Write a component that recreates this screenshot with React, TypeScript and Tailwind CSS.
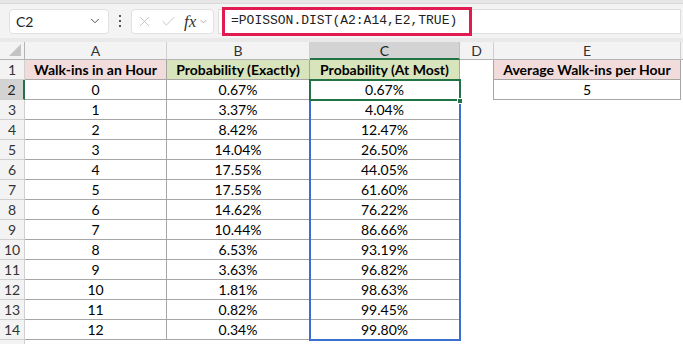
import { Check, ChevronDown, X } from "lucide-react";

const data: [string, string, string][] = [
  ["0", "0.67%", "0.67%"],
  ["1", "3.37%", "4.04%"],
  ["2", "8.42%", "12.47%"],
  ["3", "14.04%", "26.50%"],
  ["4", "17.55%", "44.05%"],
  ["5", "17.55%", "61.60%"],
  ["6", "14.62%", "76.22%"],
  ["7", "10.44%", "86.66%"],
  ["8", "6.53%", "93.19%"],
  ["9", "3.63%", "96.82%"],
  ["10", "1.81%", "98.63%"],
  ["11", "0.82%", "99.45%"],
  ["12", "0.34%", "99.80%"],
];

const cell = "flex items-center justify-center border-r border-b border-[#a6a6a6] whitespace-nowrap";
const rowHead = "flex items-center justify-center border-r border-b border-[#d0d0d0] bg-[#f3f3f3] text-[#333]";

function FormulaBar() {
  return (
    <div className="bg-[#f3f3f3]">
      <div className="h-[4px] bg-[#e6e6e6] border-b border-[#dadada]" />
      <div className="h-[34px] flex items-center pl-[9px] pr-[2px]">
        {/* name box */}
        <div className="w-[100px] h-[25px] bg-white rounded-[4px] border border-[#e1e1e1] flex items-center justify-between pl-[6px] pr-[6px] text-[14px] text-[#222]">
          <span>C2</span>
          <ChevronDown size={14} strokeWidth={1.6} className="text-[#444]" />
        </div>
        <div className="w-[22px] flex flex-col items-center gap-[3px]">
          <span className="w-[2px] h-[2px] bg-[#555]" />
          <span className="w-[2px] h-[2px] bg-[#555]" />
          <span className="w-[2px] h-[2px] bg-[#555]" />
        </div>
        {/* cancel / enter / fx */}
        <div className="w-[83px] h-[25px] bg-white rounded-[4px] border border-[#e1e1e1] flex items-center pl-[4px] gap-[7px]">
          <X size={17} strokeWidth={1.2} className="text-[#bdbdbd]" />
          <Check size={17} strokeWidth={1.2} className="text-[#bdbdbd]" />
          <span className="flex items-center">
            <span className="font-['Liberation_Serif',serif] italic text-[17px] text-[#333] leading-none">fx</span>
            <ChevronDown size={11} strokeWidth={1.5} className="text-[#888] ml-[2px]" />
          </span>
        </div>
        {/* formula input */}
        <div className="ml-[4px] flex-1 h-[25px] bg-white border border-[#dedede] flex items-center">
          <div className="ml-[3px] w-[250px] h-[29px] border-[3px] border-[#e21a52] flex items-center pl-[6px] font-['Liberation_Mono',monospace] text-[13px] text-[#222]">
            =POISSON.DIST(A2:A14,E2,TRUE)
          </div>
        </div>
      </div>
      <div className="h-[4px] bg-[#e9e9e9]" />
    </div>
  );
}

function Sheet() {
  return (
    <div className="relative grid grid-cols-[25px_142px_143px_150px_34px_187px_2px] grid-rows-[18px_repeat(15,20px)] text-[14px]">
      {/* column headers */}
      <div className="relative border-r border-b border-[#b4b4b4] bg-[#f3f3f3]">
        <svg width="12" height="12" className="absolute right-[3px] bottom-[3px]">
          <polygon points="12,0 12,12 0,12" fill="#c4c4c4" />
        </svg>
      </div>
      <div className="flex items-center justify-center bg-[#f3f3f3] border-r border-b border-[#d0d0d0] border-b-[#b4b4b4] text-[#333]">A</div>
      <div className="flex items-center justify-center bg-[#f3f3f3] border-r border-b border-[#d0d0d0] border-b-[#b4b4b4] text-[#333]">B</div>
      <div className="flex items-center justify-center bg-[#d3d3d3] border-r border-[#c0c0c0] border-b-2 border-b-[#217346] text-[#222]">C</div>
      <div className="flex items-center justify-center bg-[#f3f3f3] border-r border-b border-[#d0d0d0] border-b-[#b4b4b4] text-[#333]">D</div>
      <div className="flex items-center justify-center bg-[#f3f3f3] border-r border-b border-[#d0d0d0] border-b-[#b4b4b4] text-[#333]">E</div>
      <div className="bg-[#f3f3f3] border-b border-[#b4b4b4]" />

      {/* row 1 */}
      <div className={rowHead}>1</div>
      <div className={`${cell} bg-[#f2dcdb] font-bold`}>Walk-ins in an Hour</div>
      <div className={`${cell} bg-[#d8e4bc] font-bold`}>Probability (Exactly)</div>
      <div className={`${cell} bg-[#d8e4bc] font-bold`}>Probability (At Most)</div>
      <div className="border-r border-[#a6a6a6]" />
      <div className={`${cell} bg-[#f2dcdb] font-bold`}>Average Walk-ins per Hour</div>
      <div />

      {data.map(([a, b, c], i) => (
        <div key={i} className="contents">
          <div
            className={
              i === 0
                ? "flex items-center justify-center border-b border-[#d0d0d0] border-r-2 border-r-[#217346] bg-[#d3d3d3] text-[#222]"
                : rowHead
            }
          >
            {i + 2}
          </div>
          <div className={cell}>{a}</div>
          <div className={cell}>{b}</div>
          <div className={cell}>{c}</div>
          <div className={i === 0 ? "border-r border-[#a6a6a6]" : ""} />
          <div className={i === 0 ? cell : ""}>{i === 0 ? "5" : ""}</div>
          <div />
        </div>
      ))}

      {/* partially visible row 15 */}
      <div className="border-r border-[#d0d0d0] bg-[#f3f3f3]" />
      <div />
      <div />
      <div />
      <div />
      <div />
      <div />

      {/* reference range highlight C2:C14 */}
      <div className="absolute left-[309px] top-[37px] w-[152px] h-[262px] border-2 border-[#3b6fd0] pointer-events-none" />
      {/* active cell C2 */}
      <div className="absolute left-[309px] top-[37px] w-[152px] h-[22px] border-2 border-[#217346] pointer-events-none" />
      <div className="absolute left-[457px] top-[56px] w-[6px] h-[6px] bg-[#217346] border border-white pointer-events-none" />
    </div>
  );
}

export default function App() {
  return (
    <div className="w-[683px] h-[344px] overflow-hidden bg-white font-['Lato',sans-serif] text-black">
      <FormulaBar />
      <Sheet />
    </div>
  );
}
